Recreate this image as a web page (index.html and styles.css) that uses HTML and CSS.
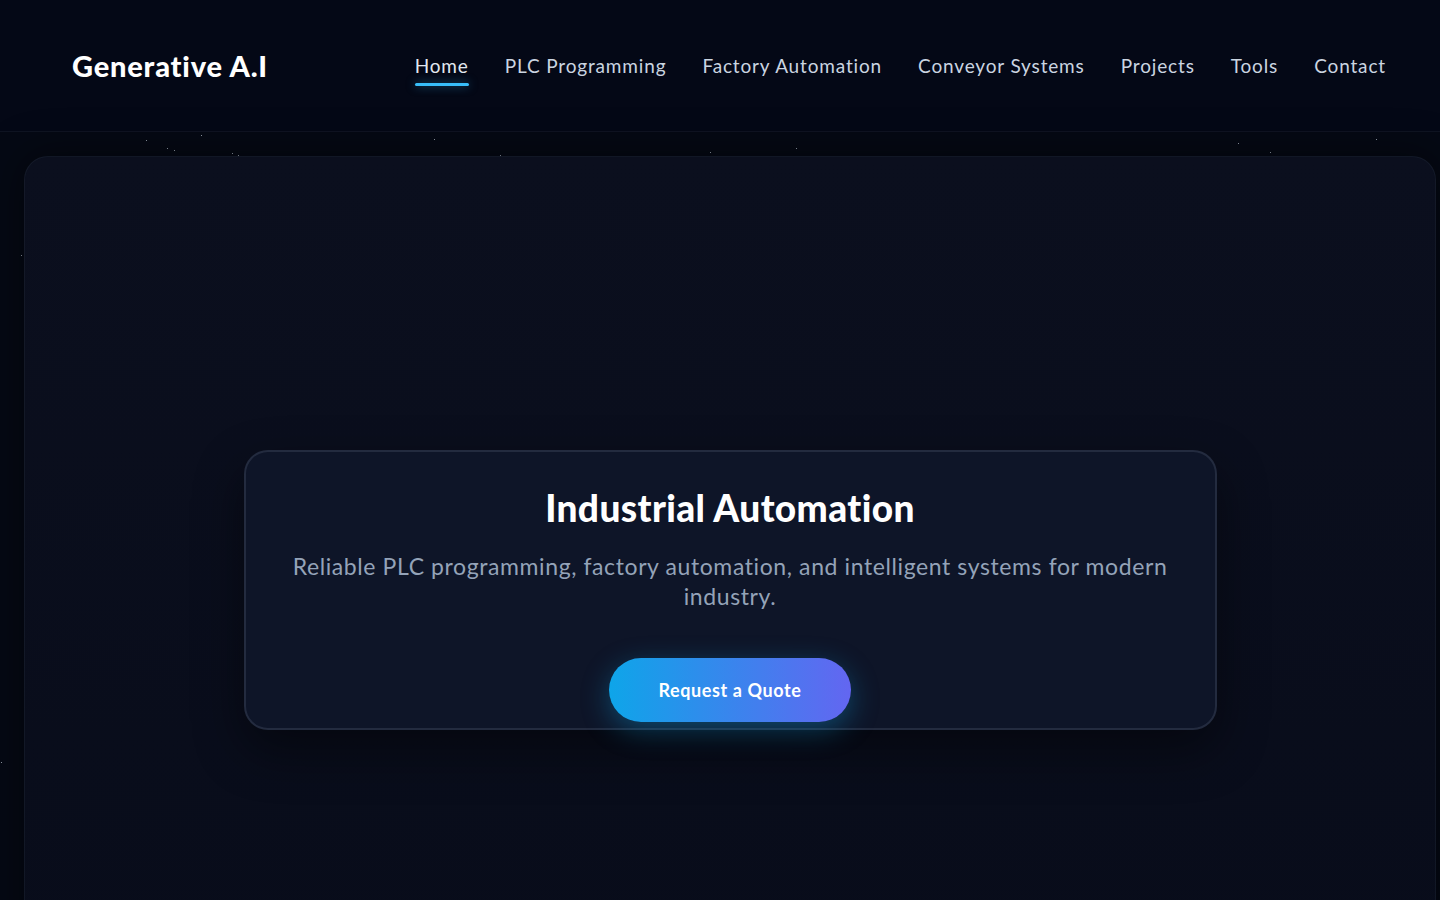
FILE: index.html
```html
<!DOCTYPE html>
<html lang="en">
<head>
  <meta charset="UTF-8">
  <meta name="viewport" content="width=device-width, initial-scale=1.0">
  <title>Generative A.I - Industrial Automation</title>
  <link rel="stylesheet" href="styles.css">
</head>
<body>
  <header class="site-header">
    <a href="#" class="logo">Generative A.I</a>
    <nav class="nav">
      <a href="#" class="nav-link active">Home</a>
      <a href="#" class="nav-link">PLC Programming</a>
      <a href="#" class="nav-link">Factory Automation</a>
      <a href="#" class="nav-link">Conveyor Systems</a>
      <a href="#" class="nav-link">Projects</a>
      <a href="#" class="nav-link">Tools</a>
      <a href="#" class="nav-link">Contact</a>
    </nav>
  </header>

  <!-- estrelas decorativas no fundo -->
  <div class="stars">
    <span class="star" style="left:146px;top:140px"></span>
    <span class="star" style="left:167px;top:148px"></span>
    <span class="star" style="left:174px;top:150px"></span>
    <span class="star" style="left:201px;top:135px"></span>
    <span class="star" style="left:232px;top:153px"></span>
    <span class="star" style="left:238px;top:155px"></span>
    <span class="star" style="left:434px;top:139px"></span>
    <span class="star" style="left:500px;top:155px"></span>
    <span class="star" style="left:710px;top:152px"></span>
    <span class="star" style="left:796px;top:148px"></span>
    <span class="star" style="left:1238px;top:143px"></span>
    <span class="star" style="left:1270px;top:152px"></span>
    <span class="star" style="left:1376px;top:139px"></span>
    <span class="star" style="left:21px;top:255px"></span>
    <span class="star" style="left:1px;top:762px"></span>
  </div>

  <main class="hero">
    <section class="hero-card">
      <h1>Industrial Automation</h1>
      <p>Reliable PLC programming, factory automation, and intelligent systems for modern industry.</p>
      <a href="#" class="btn-quote">Request a Quote</a>
    </section>
  </main>
</body>
</html>
```

FILE: styles.css
```css
body {
  margin: 0;
  font-family: Lato, "Noto Sans", sans-serif;
  background-color: #050914;
  color: #fff;
  min-height: 100vh;
  overflow: hidden;
}

a {
  text-decoration: none;
  color: inherit;
}

.site-header {
  height: 132px;
  box-sizing: border-box;
  padding: 0 54px 0 72px;
  display: flex;
  align-items: center;
  justify-content: space-between;
  background-color: #040816;
  border-bottom: 1px solid rgba(148, 163, 184, 0.08);
}

.logo {
  font-size: 29px;
  font-weight: 900;
  letter-spacing: 0.8px;
  color: #fff;
}

.nav {
  display: flex;
  gap: 36px;
}

.nav-link {
  position: relative;
  font-size: 19px;
  letter-spacing: 0.85px;
  color: #cbd5e1;
  padding: 4px 0;
}

.nav-link.active {
  color: #e2e8f0;
}

.nav-link.active::after {
  content: "";
  position: absolute;
  left: 0;
  right: 0;
  bottom: -5px;
  height: 3px;
  border-radius: 2px;
  background-color: #38bdf8;
  box-shadow: 0 0 10px rgba(56, 189, 248, 0.5);
}

.stars {
  position: absolute;
  top: 0;
  left: 0;
  width: 100%;
  height: 100%;
  pointer-events: none;
}

.star {
  position: absolute;
  width: 1px;
  height: 1px;
  background-color: rgba(203, 213, 225, 0.7);
}

.hero {
  position: relative;
  margin: 24px 4px 0 24px;
  height: 866px;
  border-radius: 24px;
  border: 1px solid rgba(148, 163, 184, 0.07);
  background: linear-gradient(180deg, #0b0f1e 0%, #080c1a 100%);
  box-shadow: 0 0 40px rgba(0, 0, 0, 0.5);
  display: flex;
  align-items: center;
  justify-content: center;
}

.hero-card {
  width: 973px;
  box-sizing: border-box;
  padding: 34px 44px 6px;
  border-radius: 24px;
  border: 2px solid rgba(148, 163, 184, 0.16);
  background-color: #0e1528;
  box-shadow: 0 20px 50px rgba(0, 0, 0, 0.45);
  text-align: center;
}

.hero-card h1 {
  margin: 0;
  font-size: 37px;
  line-height: 43px;
  font-weight: 900;
  letter-spacing: 0.4px;
  color: #fff;
}

.hero-card p {
  margin: 22px 0 0;
  font-size: 23px;
  line-height: 30px;
  letter-spacing: 0.6px;
  color: #94a3b8;
}

.btn-quote {
  display: inline-block;
  margin-top: 47px;
  height: 64px;
  line-height: 64px;
  padding: 0;
  box-sizing: border-box;
  width: 242px;
  border-radius: 32px;
  font-size: 18px;
  font-weight: 700;
  letter-spacing: 0.6px;
  color: #fff;
  background: linear-gradient(90deg, #0ea5e9 0%, #6366f1 100%);
  box-shadow: 0 8px 28px rgba(14, 165, 233, 0.35);
}
```
